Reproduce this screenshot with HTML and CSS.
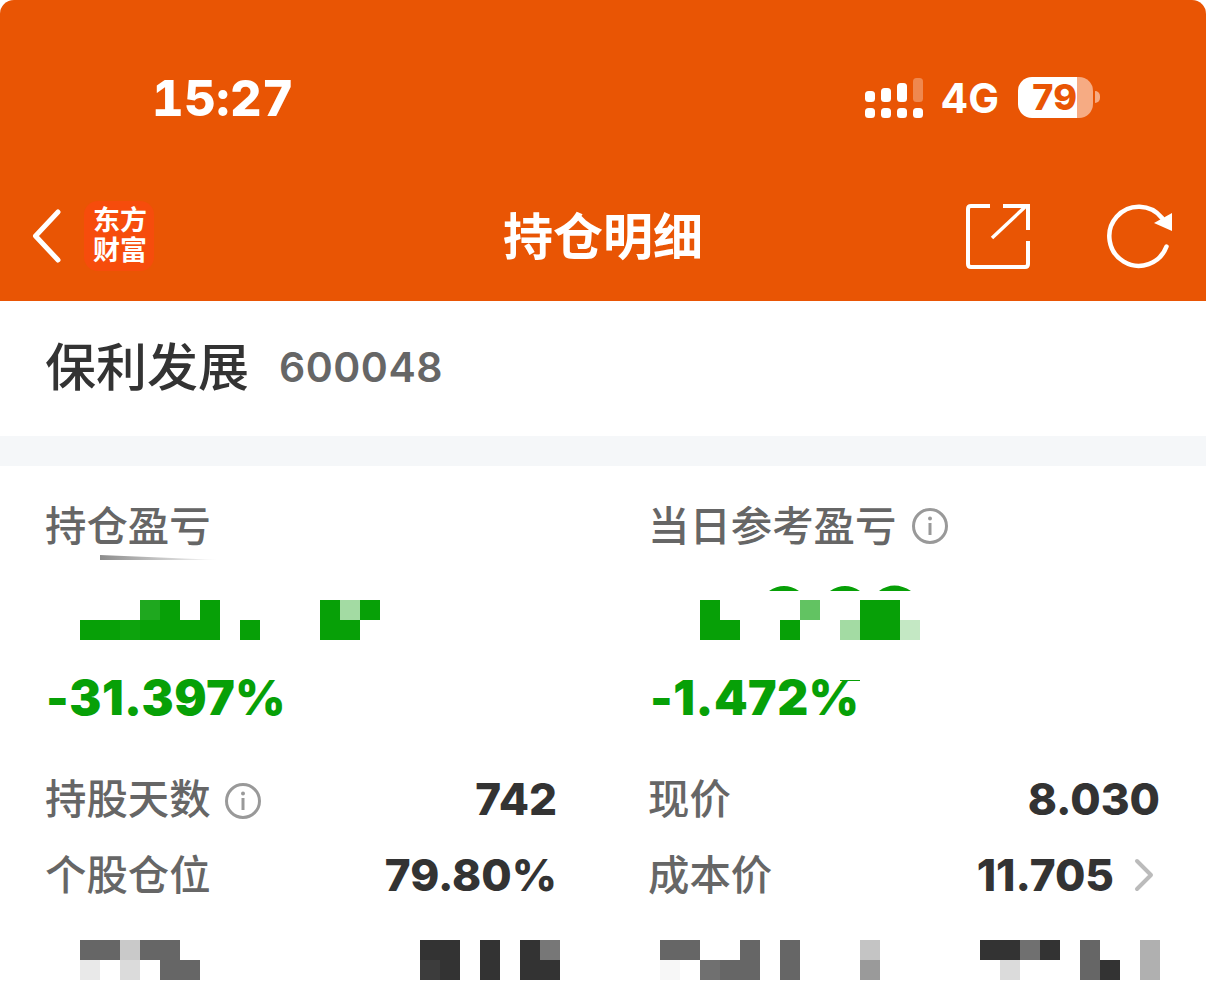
FILE: index.html
```html
<!DOCTYPE html>
<html lang="zh-CN">
<head>
    <meta charset="UTF-8">
    <meta name="viewport" content="width=device-width, initial-scale=1.0">
    <title>持仓明细</title>
    <link rel="stylesheet" href="styles.css">
</head>
<body>
    <div class="header">
        <div class="status">
            <span class="time">15:27</span>
            <div class="status-right">
                <svg class="signal" width="60" height="42" viewBox="0 0 60 42">
                    <rect x="1" y="31" width="10" height="10" rx="3.5" fill="#fff"/>
                    <rect x="17" y="31" width="10" height="10" rx="3.5" fill="#fff"/>
                    <rect x="33" y="31" width="10" height="10" rx="3.5" fill="#fff"/>
                    <rect x="49" y="31" width="10" height="10" rx="3.5" fill="#fff"/>
                    <rect x="1" y="14" width="10" height="11" rx="3.5" fill="#fff"/>
                    <rect x="17" y="11" width="10" height="14" rx="3.5" fill="#fff"/>
                    <rect x="33" y="6" width="10" height="19" rx="3.5" fill="#fff"/>
                    <rect x="49" y="1" width="10" height="24" rx="3.5" fill="#fff" opacity="0.3"/>
                </svg>
                <span class="net">4G</span>
                <div class="battery">
                    <div class="battery-fill">79</div>
                    <div class="battery-rest"></div>
                    <div class="battery-nub"></div>
                </div>
            </div>
        </div>
        <div class="nav">
            <div class="nav-left">
                <svg class="back" width="34" height="56" viewBox="0 0 34 56">
                    <path d="M28 4 L5.5 28 L28 52" fill="none" stroke="#fff" stroke-width="5" stroke-linecap="round" stroke-linejoin="round"/>
                </svg>
                <div class="logo">东方<br>财富</div>
            </div>
            <h1 class="nav-title">持仓明细</h1>
            <div class="nav-right">
                <svg width="66" height="66" viewBox="0 0 66 66">
                    <path d="M25 3 H6 Q3 3 3 6 V61 Q3 64 6 64 H60 Q63 64 63 61 V38" fill="none" stroke="#fff" stroke-width="4"/>
                    <path d="M27 35 L60 4" fill="none" stroke="#fff" stroke-width="3.5"/>
                    <path d="M38 3 H63 V27" fill="none" stroke="#fff" stroke-width="4"/>
                </svg>
                <svg width="68" height="66" viewBox="0 0 68 66">
                    <path d="M57 15 A29.5 29.5 0 1 0 61.5 43.5" fill="none" stroke="#fff" stroke-width="4.5" stroke-linecap="round"/>
                    <path d="M67 10 L67 28 L49 20 Z" fill="#fff"/>
                </svg>
            </div>
        </div>
    </div>

    <div class="stock">
        <span class="stock-name">保利发展</span>
        <span class="stock-code">600048</span>
    </div>

    <div class="stats">
        <div class="col col-left">
            <div class="label smudge-wrap">
                持仓盈亏
                <svg class="smudge" width="120" height="6" viewBox="0 0 120 6">
                    <defs>
                        <linearGradient id="fade">
                            <stop offset="0" stop-color="#8c8c8c"/>
                            <stop offset="1" stop-color="#fff"/>
                        </linearGradient>
                    </defs>
                    <path d="M0 0 L120 5 L0 5 Z" fill="url(#fade)"/>
                </svg>
            </div>
            <div class="mosaic m-profit">
                <i></i><i></i><i></i><i class="g2"></i><i class="g"></i><i></i><i class="g"></i><i></i><i></i><i></i><i></i><i></i><i class="g"></i><i class="g5"></i><i class="g"></i>
                <i class="g"></i><i class="g"></i><i class="g3"></i><i class="g"></i><i class="g"></i><i class="g"></i><i class="g"></i><i></i><i class="g"></i><i></i><i></i><i></i><i class="g"></i><i class="g"></i><i></i>
            </div>
            <div class="pct">-31.397%</div>
            <div class="row row-first">
                <span class="label">持股天数
                    <svg class="info" width="36" height="36" viewBox="0 0 36 36">
                        <circle cx="18" cy="18" r="16.5" fill="none" stroke="#999" stroke-width="3"/>
                        <circle cx="18" cy="10.5" r="2" fill="#999"/>
                        <rect x="16.5" y="15" width="3" height="12" fill="#999"/>
                    </svg>
                </span>
                <span class="value">742</span>
            </div>
            <div class="row">
                <span class="label">个股仓位</span>
                <span class="value">79.80%</span>
            </div>
            <div class="pair pair-left">
                <div class="mosaic">
                    <i class="d"></i><i class="d"></i><i class="l2"></i><i class="d"></i><i class="d"></i><i></i>
                    <i class="l4"></i><i></i><i class="l3"></i><i></i><i class="d"></i><i class="d"></i>
                </div>
                <div class="mosaic">
                    <i class="k"></i><i class="k"></i><i></i><i class="k"></i><i></i><i class="k"></i><i class="d2"></i>
                    <i class="k2"></i><i class="k"></i><i></i><i class="k"></i><i></i><i class="k"></i><i class="k"></i>
                </div>
            </div>
        </div>

        <div class="col col-right">
            <div class="label">当日参考盈亏
                <svg class="info" width="36" height="36" viewBox="0 0 36 36">
                    <circle cx="18" cy="18" r="16.5" fill="none" stroke="#999" stroke-width="3"/>
                    <circle cx="18" cy="10.5" r="2" fill="#999"/>
                    <rect x="16.5" y="15" width="3" height="12" fill="#999"/>
                </svg>
            </div>
            <div class="mosaic m-today">
                <svg class="arcs" width="142" height="7" viewBox="0 0 142 7">
                    <path d="M0 7 Q15 -3 30 7 Z M61 7 Q76 -3 91 7 Z M110 7 Q125 -4 142 7 Z" fill="#07a007"/>
                </svg>
                <i class="g"></i><i></i><i></i><i></i><i></i><i class="g4"></i><i></i><i></i><i class="g"></i><i class="g"></i><i></i>
                <i class="g"></i><i class="g"></i><i></i><i></i><i class="g"></i><i></i><i></i><i class="g5"></i><i class="g"></i><i class="g"></i><i class="g6"></i>
            </div>
            <div class="pct pct-today">-1.472%</div>
            <div class="row row-first">
                <span class="label">现价</span>
                <span class="value">8.030</span>
            </div>
            <div class="row">
                <span class="label">成本价</span>
                <span class="value-link">
                    <span class="value">11.705</span>
                    <svg width="20" height="34" viewBox="0 0 20 34">
                        <path d="M3 3 L17 17 L3 31" fill="none" stroke="#bbb" stroke-width="4" stroke-linecap="round" stroke-linejoin="round"/>
                    </svg>
                </span>
            </div>
            <div class="pair pair-right">
                <div class="mosaic">
                    <i class="d"></i><i class="d"></i><i></i><i></i><i class="d"></i><i></i><i class="d"></i><i></i><i></i><i></i><i class="l1"></i>
                    <i class="l5"></i><i></i><i class="d3"></i><i class="d"></i><i class="d"></i><i></i><i class="d"></i><i></i><i></i><i></i><i class="m"></i>
                </div>
                <div class="mosaic">
                    <i class="k"></i><i class="k"></i><i class="d3"></i><i class="k"></i><i></i><i class="d"></i><i></i><i></i><i class="n"></i>
                    <i></i><i class="l3"></i><i></i><i></i><i></i><i class="d"></i><i class="k"></i><i></i><i class="n"></i>
                </div>
            </div>
        </div>
    </div>
</body>
</html>
```

FILE: styles.css
```css
/* Global styles */
body {
    margin: 0;
    background: #fff;
    color: #333;
    font-family: 'Noto Sans CJK SC', sans-serif;
    overflow: hidden;
}

/* Header styles */
.header {
    background: #e95504;
    color: #fff;
    height: 301px;
    border-radius: 14px 14px 0 0;
}
.status {
    height: 196px;
    padding: 0 106px 0 152px;
    display: flex;
    justify-content: space-between;
    align-items: center;
}
.time {
    font-family: 'Inter', sans-serif;
    font-size: 49px;
    font-weight: 800;
    font-variant-numeric: tabular-nums;
    letter-spacing: 0.5px;
}
.status-right {
    display: flex;
    align-items: center;
}
.signal {
    margin-right: 17px;
}
.net {
    font-family: 'Inter', sans-serif;
    font-size: 41px;
    font-weight: 700;
    margin-right: 19px;
}
.battery {
    display: flex;
    align-items: center;
    margin-bottom: 2px;
}
.battery-fill {
    width: 59px;
    height: 41px;
    box-sizing: border-box;
    background: #fff;
    color: #e95504;
    border-radius: 14px 0 0 14px;
    font-family: 'Inter', sans-serif;
    font-size: 36px;
    font-weight: 800;
    line-height: 41px;
    text-align: right;
}
.battery-rest {
    width: 16px;
    height: 41px;
    background: #f6ab83;
    border-radius: 0 14px 14px 0;
}
.battery-nub {
    width: 5px;
    height: 12px;
    margin-left: 2px;
    background: #f6ab83;
    border-radius: 0 6px 6px 0;
}

.nav {
    display: grid;
    grid-template-columns: 1fr auto 1fr;
    align-items: center;
    height: 80px;
    padding: 0 33px;
}
.nav-left {
    display: flex;
    align-items: center;
    gap: 20px;
}
.back {
    margin-left: -3px;
}
.logo {
    width: 70px;
    height: 70px;
    background: #f64c0c;
    border-radius: 14px;
    font-size: 27px;
    font-weight: 700;
    line-height: 30px;
    text-align: center;
    padding: 3px 0 0 2px;
    box-sizing: border-box;
}
.nav-title {
    margin: 0;
    font-size: 50px;
    font-weight: 700;
    line-height: 74px;
    padding-bottom: 6px;
}
.nav-right {
    display: flex;
    justify-content: flex-end;
    align-items: center;
    gap: 74px;
}

/* Stock name row */
.stock {
    height: 131px;
    padding: 0 0 4px 45px;
    display: flex;
    align-items: center;
    gap: 30px;
    border-bottom: 30px solid #f5f7f9;
}
.stock-name {
    font-size: 51px;
    font-weight: 500;
    line-height: 66px;
    padding-bottom: 6px;
    color: #333;
}
.stock-code {
    font-family: 'Inter', sans-serif;
    font-size: 41px;
    font-weight: 600;
    letter-spacing: 0.5px;
    color: #666;
}

/* Two columns of figures */
.stats {
    display: grid;
    grid-template-columns: 510px 510px;
    column-gap: 94px;
    padding: 36px 46px 0;
}
.label {
    font-size: 41.4px;
    font-weight: 500;
    line-height: 43px;
    padding-bottom: 5px;
    color: #666;
    display: flex;
    align-items: center;
    gap: 16px;
}
.row .label {
    gap: 14px;
}
.col-left .label {
    margin-left: -1px;
}
.col-right .label {
    margin-left: -2px;
}
.smudge-wrap {
    position: relative;
}
.smudge {
    position: absolute;
    left: 55px;
    top: 53px;
}
.info {
    flex: none;
    margin-top: 5px;
}
.row .info {
    margin-top: 9px;
}
.pct {
    margin-top: 34px;
    color: #07a007;
    font-family: 'Inter', sans-serif;
    font-size: 48px;
    font-weight: 900;
    line-height: 48px;
    letter-spacing: 0.5px;
}
.pct-today {
    position: relative;
}
.pct-today::after {
    content: '';
    position: absolute;
    left: 190px;
    top: 6px;
    width: 20px;
    height: 1px;
    background: #07a007;
}
.row {
    height: 76px;
    display: flex;
    justify-content: space-between;
    align-items: center;
}
.row-first {
    margin-top: 39px;
}
.value {
    font-family: 'Inter', sans-serif;
    font-size: 44px;
    font-weight: 800;
    color: #333;
}
.col-left .value {
    margin-right: -1px;
}
.value-link {
    display: flex;
    align-items: center;
    gap: 20px;
    margin-right: 6px;
}

/* Blurred figures, 20px blocks */
.mosaic {
    position: relative;
    display: grid;
    grid-auto-rows: 20px;
    width: max-content;
}
.m-profit {
    grid-template-columns: repeat(15, 20px);
    margin: 50px 0 0 34px;
}
.m-today {
    grid-template-columns: repeat(11, 20px);
    margin: 50px 0 0 50px;
}
.arcs {
    position: absolute;
    left: 69px;
    top: -16px;
}
.pair {
    display: flex;
    justify-content: space-between;
    margin-top: 27px;
}
.pair-left {
    margin-left: 34px;
    margin-right: -4px;
}
.pair-left .mosaic:first-child {
    grid-template-columns: repeat(6, 20px);
}
.pair-left .mosaic:last-child {
    grid-template-columns: repeat(7, 20px);
}
.pair-right {
    margin-left: 10px;
}
.pair-right .mosaic:first-child {
    grid-template-columns: repeat(11, 20px);
}
.pair-right .mosaic:last-child {
    grid-template-columns: repeat(9, 20px);
}

/* Block shades */
.g { background: #07a007; }
.g2 { background: #1fa81f; }
.g3 { background: #0da30d; }
.g4 { background: #62c362; }
.g5 { background: #a3dba3; }
.g6 { background: #c4e8c4; }
.d { background: #666; }
.d2 { background: #777; }
.d3 { background: #707070; }
.k { background: #333; }
.k2 { background: #3c3c3c; }
.m { background: #9a9a9a; }
.n { background: #b0b0b0; }
.l1 { background: #c4c4c4; }
.l2 { background: #c9c9c9; }
.l3 { background: #dbdbdb; }
.l4 { background: #e9e9e9; }
.l5 { background: #f7f7f7; }
```
